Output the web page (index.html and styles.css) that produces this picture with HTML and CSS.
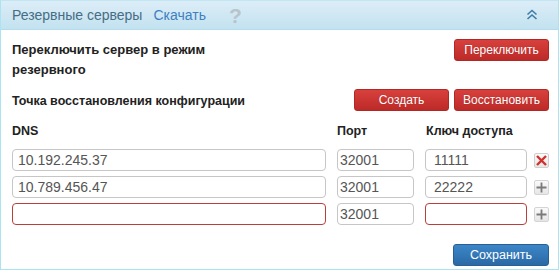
FILE: index.html
```html
<!DOCTYPE html>
<html lang="ru">
<head>
  <meta charset="UTF-8">
  <title>Резервные серверы</title>
  <link rel="stylesheet" href="styles.css">
</head>
<body>
  <div class="panel">
    <div class="panel-head">
      <span class="head-title">Резервные серверы</span>
      <a class="head-link" href="#">Скачать</a>
      <span class="head-help">?</span>
      <svg class="head-toggle" width="12" height="12" viewBox="0 0 12 12">
        <path d="M1.5 5.5 L6 1.5 L10.5 5.5 M1.5 10 L6 6 L10.5 10" fill="none" stroke="#3f7da8" stroke-width="1.6"/>
      </svg>
    </div>

    <div class="panel-body">
      <div class="action-row">
        <div class="action-label">Переключить сервер в режим резервного</div>
        <div class="action-buttons">
          <button class="btn btn-red">Переключить</button>
        </div>
      </div>

      <div class="action-row restore-row">
        <div class="action-label">Точка восстановления конфигурации</div>
        <div class="action-buttons">
          <button class="btn btn-red">Создать</button>
          <button class="btn btn-red">Восстановить</button>
        </div>
      </div>

      <div class="dns-grid">
        <div class="col-label">DNS</div>
        <div class="col-label">Порт</div>
        <div class="col-label">Ключ доступа</div>
        <div></div>

        <input class="field dns" value="10.192.245.37">
        <input class="field port" value="32001">
        <input class="field key" value="11111">
        <span class="row-btn remove">
          <svg width="13" height="13" viewBox="0 0 13 13"><path d="M2 2 L11 11 M11 2 L2 11" stroke="#d0312d" stroke-width="2.4"/></svg>
        </span>

        <input class="field dns" value="10.789.456.47">
        <input class="field port" value="32001">
        <input class="field key" value="22222">
        <span class="row-btn">
          <svg width="11" height="11" viewBox="0 0 11 11"><path d="M5.5 0.5 V10.5 M0.5 5.5 H10.5" stroke="#7a7a7a" stroke-width="1.8"/></svg>
        </span>

        <input class="field dns invalid" value="">
        <input class="field port" value="32001">
        <input class="field key invalid" value="">
        <span class="row-btn">
          <svg width="11" height="11" viewBox="0 0 11 11"><path d="M5.5 0.5 V10.5 M0.5 5.5 H10.5" stroke="#7a7a7a" stroke-width="1.8"/></svg>
        </span>
      </div>

      <div class="footer">
        <button class="btn btn-blue">Сохранить</button>
      </div>
    </div>
  </div>
</body>
</html>
```

FILE: styles.css
```css
body { margin: 0; font-family: "Liberation Sans", Arial, sans-serif; background: #fff; }

.panel {
  width: 559px; height: 270px;
  box-sizing: border-box;
  border: 1px solid #ace3f0;
  border-top-color: #bfe6f2;
}

.panel-head {
  height: 28px;
  display: flex; align-items: center;
  padding: 0 11px;
  background: linear-gradient(#dcedf7, #c3e2f0);
  border-bottom: 1px solid #b5dcec;
  font-size: 14px;
}
.head-title { color: #476d85; }
.head-link { color: #3e7fc2; text-decoration: none; margin-left: 11px; }
.head-help { color: #b8c4cb; font-size: 21px; font-weight: bold; margin-left: 23px; line-height: 1; }
.head-toggle { margin-left: auto; margin-right: 9px; }

.panel-body { padding: 9px 9px 0 11px; }

.action-row { display: flex; justify-content: space-between; align-items: flex-start; }
.action-label {
  width: 230px;
  font-size: 13px; font-weight: bold; color: #222;
  line-height: 20px; padding-top: 1px;
}
.restore-row { margin-top: 9px; }
.restore-row .action-label { width: auto; padding-top: 2px; font-size: 12.5px; }
.action-buttons { display: flex; gap: 5px; }

.btn {
  height: 22px;
  border: 1px solid #b02724;
  border-radius: 3px;
  color: #fff;
  font-family: "Liberation Sans", Arial, sans-serif;
  font-size: 12px;
  padding: 0;
  cursor: pointer;
  text-shadow: 0 0 1px rgba(120, 20, 20, 0.4);
}
.btn-red { width: 95px; background: linear-gradient(#d8403d, #bc2a27); }
.btn-blue {
  width: 96px; height: 22px;
  background: linear-gradient(#3c86c7, #2a69a6);
  border-color: #2a5f93;
  font-size: 12.5px;
  text-shadow: none;
}

.dns-grid {
  display: grid;
  grid-template-columns: 314px 77px 102px 15px;
  column-gap: 11px;
  row-gap: 5px;
  align-items: center;
  margin-top: 13px;
}
.col-label { font-size: 12.5px; font-weight: bold; color: #222; margin-bottom: 6px; }
.dns-grid .col-label:nth-child(3) { margin-left: 1px; }

.field {
  height: 22px;
  box-sizing: border-box;
  border: 1px solid #c6c6c6;
  border-radius: 4px;
  padding: 0 5px;
  font-family: "Liberation Sans", Arial, sans-serif;
  font-size: 14px;
  color: #555;
  width: 100%;
}
.field.port { padding: 0 2px; }
.field.key { padding: 0 8px; }
.field.invalid { border-color: #b8403c; }

.row-btn {
  width: 15px; height: 15px;
  box-sizing: border-box;
  border: 1px solid #d4d4d4;
  border-radius: 2px;
  background: linear-gradient(#fafafa, #e6e6e6);
  display: flex; align-items: center; justify-content: center;
  margin-left: -4px;
}
.row-btn.remove { border-color: #cfcfcf; }

.footer { display: flex; justify-content: flex-end; margin-top: 19px; }
```
